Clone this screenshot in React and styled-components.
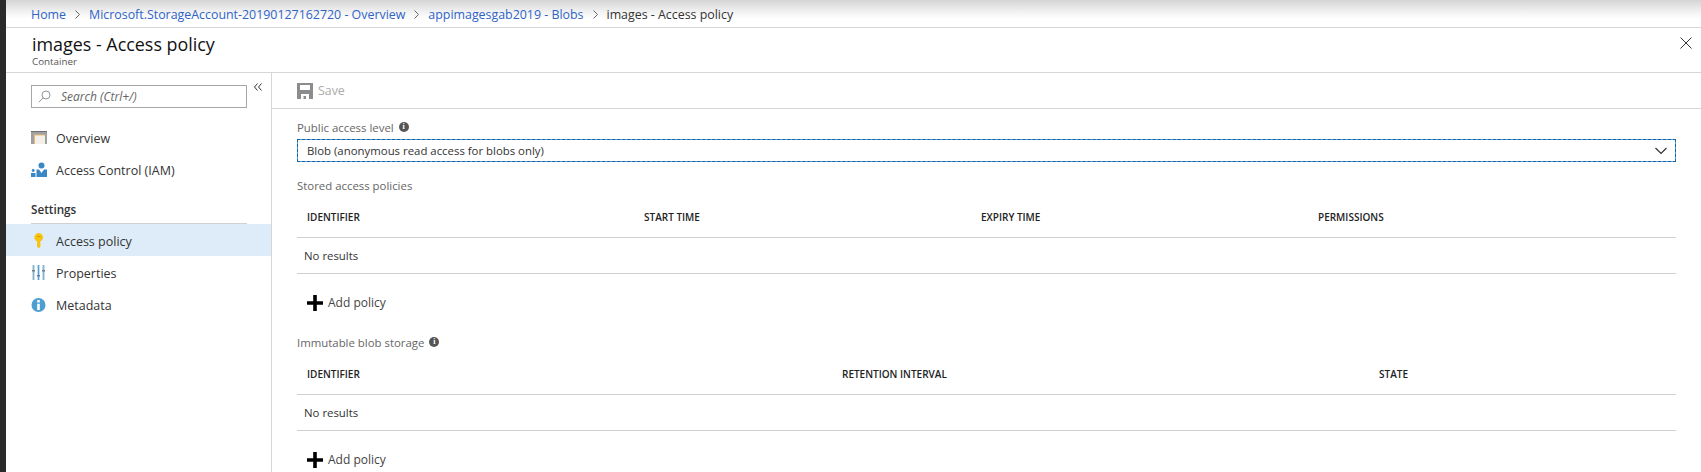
import React from 'react';
import styled, { createGlobalStyle } from 'styled-components';

const Global = createGlobalStyle`
  html, body { margin: 0; padding: 0; background: #fff; }
  body { font-family: "Open Sans", "Noto Sans", sans-serif; color: #252525; overflow: hidden; }
`;

const Page = styled.div`
  display: flex;
  width: 1701px;
  height: 472px;
  overflow: hidden;
`;
const Strip = styled.div`
  width: 6px;
  flex: none;
  background: #2a2a2a;
`;
const Main = styled.div`
  flex: 1;
  display: flex;
  flex-direction: column;
  min-width: 0;
`;
const Crumbs = styled.nav`
  height: 28px;
  flex: none;
  box-sizing: border-box;
  padding: 2px 0 0 25px;
  display: flex;
  align-items: center;
  gap: 9px;
  font-size: 12.4px;
  background: linear-gradient(#d4d4d4 0, #f2f2f2 12px, #fff 19px);
  border-bottom: 1px solid #d6d6d6;
`;
const Crumb = styled.span`
  color: ${p => (p.$current ? '#333' : '#2f63c8')};
`;
const Header = styled.header`
  height: 45px;
  flex: none;
  box-sizing: border-box;
  padding: 4px 9px 0 26px;
  display: flex;
  justify-content: space-between;
  border-bottom: 1px solid #d6d6d6;
`;
const Title = styled.h1`
  margin: 0;
  font-size: 17.9px;
  line-height: 24px;
  font-weight: 400;
  color: #111;
`;
const Sub = styled.div`
  font-size: 9.8px;
  line-height: 12px;
  color: #555;
`;
const CloseIcon = styled.svg`
  width: 12px;
  height: 12px;
  margin-top: 5px;
`;
const Body = styled.div`
  flex: 1;
  display: flex;
  min-height: 0;
`;
const Sidebar = styled.aside`
  width: 266px;
  flex: none;
  box-sizing: border-box;
  border-right: 1px solid #d6d6d6;
  padding-top: 12px;
  position: relative;
`;
const Collapse = styled.svg`
  position: absolute;
  top: 10px;
  right: 9px;
  width: 8px;
  height: 8px;
`;
const SearchBox = styled.div`
  margin-left: 25px;
  width: 216px;
  height: 23px;
  box-sizing: border-box;
  border: 1px solid #a6a6a6;
  display: flex;
  align-items: center;
  gap: 10px;
  padding-left: 6px;
  font-size: 12px;
  font-style: italic;
  color: #666;
`;
const NavList = styled.div`
  margin-top: 13px;
`;
const NavItem = styled.div`
  height: 32px;
  box-sizing: border-box;
  padding: 2px 0 0 25px;
  display: flex;
  align-items: center;
  gap: 9px;
  font-size: 12.5px;
  color: #333;
  background: ${p => (p.$active ? '#deecf9' : 'transparent')};
`;
const NavIcon = styled.svg`
  width: 16px;
  height: 16px;
  flex: none;
`;
const NavHeading = styled.div`
  margin: 15px 24px 0 25px;
  height: 24px;
  box-sizing: border-box;
  border-bottom: 1px solid #d0d0d0;
  font-size: 11.7px;
  line-height: 18px;
  font-weight: 600;
  color: #333;
`;
const Content = styled.main`
  flex: 1;
  min-width: 0;
  display: flex;
  flex-direction: column;
`;
const Toolbar = styled.div`
  height: 36px;
  flex: none;
  box-sizing: border-box;
  border-bottom: 1px solid #d6d6d6;
  padding-left: 25px;
  display: flex;
  align-items: center;
  gap: 5px;
  font-size: 12.4px;
  color: #ababab;
`;
const Form = styled.div`
  padding: 11px 0 0 25px;
  width: 1379px;
`;
const Label = styled.div`
  display: flex;
  align-items: center;
  gap: 5px;
  height: 16px;
  box-sizing: border-box;
  padding-bottom: 2px;
  margin-top: ${p => p.$mt || 0}px;
  font-size: 11.4px;
  color: #666;
`;
const InfoDot = styled.span`
  width: 10px;
  height: 10px;
  border-radius: 50%;
  background: #555;
  color: #fff;
  font-size: 8px;
  line-height: 10px;
  font-weight: 700;
  text-align: center;
  font-family: "Liberation Serif", serif;
`;
const Select = styled.div`
  margin-top: 3px;
  height: 23px;
  box-sizing: border-box;
  border: 1px dashed #1a5f9e;
  background: linear-gradient(#fff, #fff) padding-box, #4aa3df border-box;
  display: flex;
  align-items: center;
  justify-content: space-between;
  padding: 0 8px 0 9px;
  font-size: 11.4px;
  color: #333;
`;
const Row = styled.div`
  display: grid;
  grid-template-columns: ${p => p.$cols};
  height: ${p => p.$h}px;
  margin-top: ${p => p.$mt || 0}px;
  box-sizing: border-box;
  align-items: center;
  border-bottom: 1px solid #d0d0d0;
`;
const HeadCell = styled.div`
  padding: 0 0 2px 10px;
  font-size: 10px;
  font-weight: 600;
  color: #222;
`;
const EmptyCell = styled.div`
  padding-left: 7px;
  font-size: 11.4px;
  color: #333;
`;
const AddButton = styled.div`
  height: 58px;
  box-sizing: border-box;
  display: flex;
  align-items: center;
  gap: 5px;
  padding-left: 10px;
  font-size: 12px;
  color: #444;
`;
const AddText = styled.span`
  padding-bottom: 2px;
`;

const Chevron = () => (
  <svg width="5" height="9" viewBox="0 0 5 9"><path d="M.5.5l4 4-4 4" fill="none" stroke="#666" /></svg>
);

const Info = () => <InfoDot>i</InfoDot>;

const Plus = () => (
  <svg width="16" height="16" viewBox="0 0 16 16"><path d="M6.200 0h3.600v6.200H16v3.600H9.800V16H6.200V9.800H0V6.200h6.200z" fill="#000" /></svg>
);

const stored = '337px 337px 337px 1fr';
const immutable = '535px 537px 1fr';

export default function App() {
  return (
    <Page>
      <Global />
      <Strip />
      <Main>
        <Crumbs>
          <Crumb>Home</Crumb><Chevron />
          <Crumb>Microsoft.StorageAccount-20190127162720 - Overview</Crumb><Chevron />
          <Crumb>appimagesgab2019 - Blobs</Crumb><Chevron />
          <Crumb $current>images - Access policy</Crumb>
        </Crumbs>
        <Header>
          <div>
            <Title>images - Access policy</Title>
            <Sub>Container</Sub>
          </div>
          <CloseIcon viewBox="0 0 12 12"><path d="M.5.5l11 11M11.500.5l-11 11" stroke="#333" fill="none" /></CloseIcon>
        </Header>
        <Body>
          <Sidebar>
            <Collapse viewBox="0 0 8 8"><path d="M3.500.5L.5 4l3 3.500M7.500.5L4.500 4l3 3.500" fill="none" stroke="#333" /></Collapse>
            <SearchBox>
              <svg width="13" height="13" viewBox="0 0 13 13"><circle cx="8" cy="5" r="4" fill="none" stroke="#8a8a8a" strokeWidth=".9" /><path d="M5.200 7.800L.8 12.300" stroke="#8a8a8a" strokeWidth=".9" fill="none" /></svg>
              Search (Ctrl+/)
            </SearchBox>
            <NavList>
              <NavItem>
                <NavIcon viewBox="0 0 16 16"><rect y="1" width="16" height="13" fill="#a0a0a0" /><rect y="1" width="16" height="1" fill="#6f6f6f" /><rect x="3" y="4.500" width="11" height="9.500" fill="#e8b878" /><rect x="4" y="5.500" width="10" height="8.500" fill="#f3f0ea" /></NavIcon>
                Overview
              </NavItem>
              <NavItem>
                <NavIcon viewBox="0 0 16 16"><circle cx="10.500" cy="3.500" r="3" fill="#3a87c6" /><path d="M5.500 15V7.500h2.500l2.500 3.500L13 7.500h3V15z" fill="#3a87c6" /><circle cx="2.200" cy="8.500" r="1.400" fill="#3a87c6" /><path d="M0 15v-4h4.500v4z" fill="#3a87c6" /></NavIcon>
                Access Control (IAM)
              </NavItem>
              <NavHeading>Settings</NavHeading>
              <NavItem $active>
                <NavIcon viewBox="0 0 16 16"><path d="M6 8.300A4.300 4.300 0 1 1 9.400 8.300V13.500L7.700 15.500 6 13.500z" fill="#f6c40f" /><path d="M6 3h3.400v1H6z" fill="#d19f00" /></NavIcon>
                Access policy
              </NavItem>
              <NavItem>
                <NavIcon viewBox="0 0 16 16"><path d="M1 0h3v15H1zM6 0h3v15H6zM11 0h3v15h-3z" fill="#c6dfec" /><path d="M2 0h1v15H2zM12 0h1v15h-1z" fill="#8fb0c4" /><path d="M7 0h1v15H7z" fill="#4c9fdc" /><path d="M1 5h3v1.500H1zM6 10h3v1.500H6zM11 5h3v1.500h-3z" fill="#6f7f8a" /></NavIcon>
                Properties
              </NavItem>
              <NavItem>
                <NavIcon viewBox="0 0 16 16"><circle cx="7.500" cy="8" r="7" fill="#4d9fd2" /><path d="M6.200 3h2.600v2.400H6.200zM6.200 6.800h2.600V13H6.200z" fill="#fff" /></NavIcon>
                Metadata
              </NavItem>
            </NavList>
          </Sidebar>
          <Content>
            <Toolbar>
              <svg width="16" height="16" viewBox="0 0 16 16"><path d="M0 0h16v16H0z" fill="#8c8c8c" /><path d="M3 2h10v5H3zM4 11h8v5H4z" fill="#fff" /><rect x="6.500" y="13" width="2.500" height="3" fill="#8c8c8c" /></svg>
              Save
            </Toolbar>
            <Form>
              <Label>Public access level <Info /></Label>
              <Select>
                Blob (anonymous read access for blobs only)
                <svg width="12" height="8" viewBox="0 0 12 8"><path d="M.5 1l5.500 5.500L11.500 1" fill="none" stroke="#333" strokeWidth="1.200" /></svg>
              </Select>
              <Label $mt={16}>Stored access policies</Label>
              <Row $cols={stored} $h={40} $mt={4}>
                <HeadCell>IDENTIFIER</HeadCell><HeadCell>START TIME</HeadCell><HeadCell>EXPIRY TIME</HeadCell><HeadCell>PERMISSIONS</HeadCell>
              </Row>
              <Row $cols="1fr" $h={36}><EmptyCell>No results</EmptyCell></Row>
              <AddButton><Plus /><AddText>Add policy</AddText></AddButton>
              <Label $mt={3}>Immutable blob storage <Info /></Label>
              <Row $cols={immutable} $h={40} $mt={4}>
                <HeadCell>IDENTIFIER</HeadCell><HeadCell>RETENTION INTERVAL</HeadCell><HeadCell>STATE</HeadCell>
              </Row>
              <Row $cols="1fr" $h={36}><EmptyCell>No results</EmptyCell></Row>
              <AddButton><Plus /><AddText>Add policy</AddText></AddButton>
            </Form>
          </Content>
        </Body>
      </Main>
    </Page>
  );
}
